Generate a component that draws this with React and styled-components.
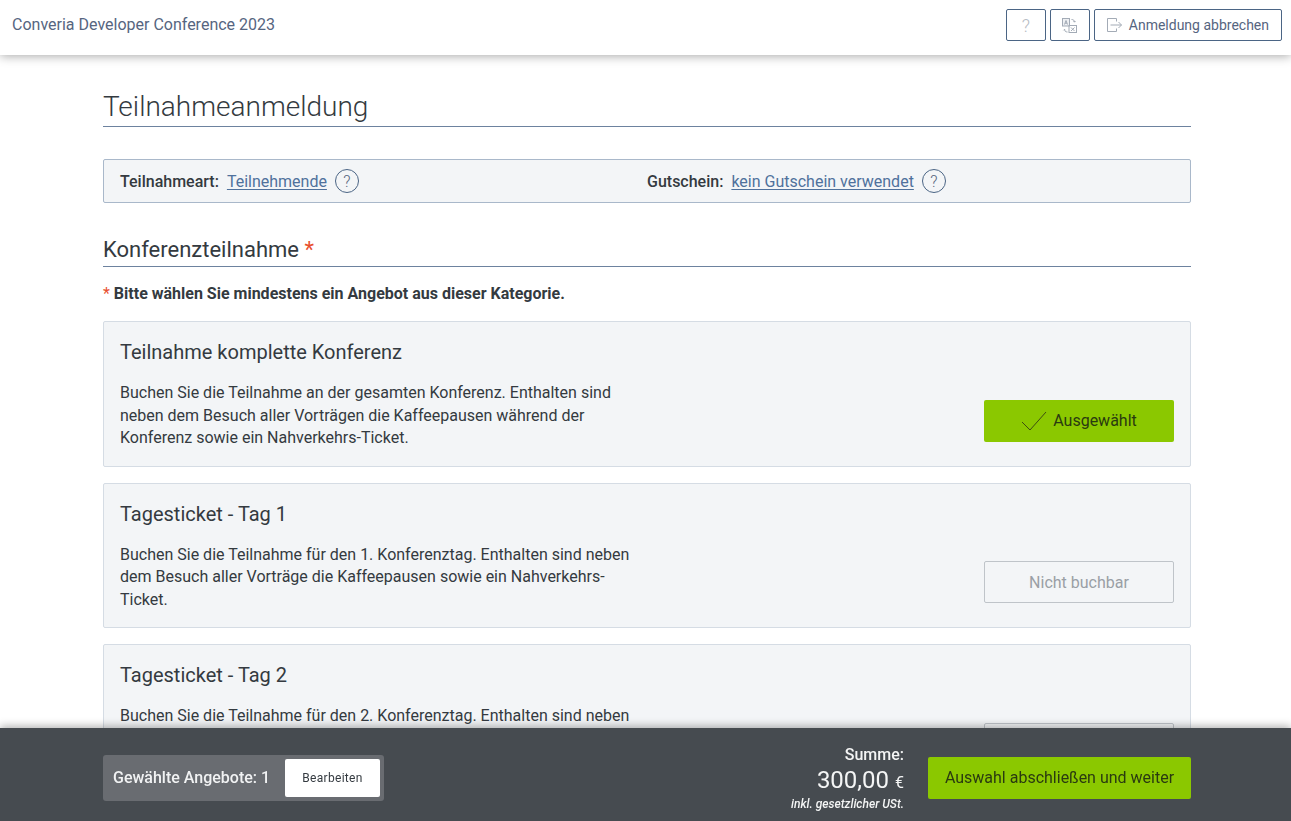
import React from "react";
import styled, { createGlobalStyle } from "styled-components";

const Global = createGlobalStyle`
  html, body { margin: 0; padding: 0; height: 100%; overflow: hidden; background: #fff; }
  body { font-family: Roboto, "Liberation Sans", sans-serif; color: #343a40; }
  * { box-sizing: border-box; }
`;
const Header = styled.header`
  height: 55px; background: #fff; display: flex; align-items: flex-start; justify-content: space-between;
  padding: 9px 9px 0 12px; box-shadow: 0 1px 10px rgba(0,0,0,.35); position: relative; z-index: 2;
`;
const Brand = styled.div`font-size: 16px; color: #56657f; line-height: 24px; margin-top: 4px;`;
const Tools = styled.div`display: flex; gap: 4px;`;
const ToolButton = styled.button`
  height: 32px; min-width: 40px; padding: ${p => p.$wide ? "0 12px 0 11px" : "0"}; display: flex; align-items: center; justify-content: center; gap: 7px;
  background: #fff; border: 1px solid #4b6585; border-radius: 2px; font: 400 14px Roboto, sans-serif; color: #56657f;
`;
const HelpGlyph = styled.span`font-size: 18px; font-weight: 300; color: #b5bbc3;`;
const Main = styled.main`padding: 32px 100px 0 103px;`;
const Title = styled.h1`
  margin: 0; font-size: 28px; font-weight: 300; line-height: 39px; color: #343a40; border-bottom: 1px solid #6d829f;
`;
const InfoBar = styled.div`
  margin-top: 32px; height: 44px; background: #f3f5f7; border: 1px solid #a9b8ca; border-radius: 2px; display: grid;
  grid-template-columns: 527px 1fr; padding-left: 16px; align-items: center; font-size: 16px;
`;
const InfoItem = styled.div`display: flex; align-items: center;`;
const Label = styled.strong`font-weight: 500; margin-right: 8px;`;
const InfoLink = styled.a`color: #4f719c; text-decoration: underline; text-underline-offset: 2px;`;
const HelpCircle = styled.span`
  width: 24px; height: 24px; margin-left: 8px; border: 1px solid #4b6585; border-radius: 50%; display: inline-flex;
  align-items: center; justify-content: center; font-size: 16px; font-weight: 300; color: #56657f;
`;
const SectionTitle = styled.h2`
  margin: 31px 0 0; font-size: 22px; line-height: 31px; font-weight: 400; border-bottom: 1px solid #6d829f; padding-bottom: 1px; color: #343a40;
`;
const Star = styled.span`color: #e8502f; font-weight: ${p => p.$thin ? 400 : "inherit"};`;
const Hint = styled.p`margin: 16px 0 17px; font-size: 16px; line-height: 21px; font-weight: 700;`;
const Cards = styled.div`display: flex; flex-direction: column; gap: 16px;`;
const Card = styled.article`
  height: 145.5px; background: #f3f5f7; border: 1px solid #d5dce4; border-radius: 2px; padding: 16px;
`;
const CardTitle = styled.h3`margin: 0 0 16px; font-size: 20px; line-height: 28px; font-weight: 400; color: #343a40;`;
const CardRow = styled.div`display: flex; justify-content: space-between; align-items: flex-end;`;
const CardText = styled.p`margin: 0; width: 515px; font-size: 16px; line-height: 22.5px; color: #343a40;`;
const SelectButton = styled.button`
  width: 190px; height: 42px; margin-bottom: 8px; border-radius: 2px; font: 400 16px Roboto, sans-serif; display: flex; align-items: center; justify-content: center; gap: 6px;
  background: ${p => p.$selected ? "#8bc800" : "#f3f5f7"}; color: ${p => p.$selected ? "#2a3a10" : "#9a9fa5"};
  border: ${p => p.$selected ? "0" : "1px solid #bfc4c9"};
`;
const Footer = styled.footer`
  position: fixed; left: 0; right: 0; bottom: 0; height: 93px; background: #464b50; padding: 6px 100px 0 103px;
  display: flex; align-items: center; justify-content: space-between; box-shadow: 0 -2px 8px rgba(0,0,0,.3); z-index: 3;
`;
const Chosen = styled.div`
  width: 281px; height: 46px; background: #696c71; border-radius: 3px; display: flex; align-items: center; justify-content: space-between; padding: 0 4px 0 10px;
  font-size: 16px; font-weight: 500; color: #f1f2f3;
`;
const EditButton = styled.button`
  width: 95px; height: 38px; background: #fff; border: 0; border-radius: 2px; font: 400 12px Roboto, sans-serif; color: #343a40; letter-spacing: .3px;
`;
const FooterRight = styled.div`display: flex; align-items: center; gap: 24px;`;
const Sum = styled.div`text-align: right; color: #f4f5f5; padding-top: 2px;`;
const SumLabel = styled.div`font-size: 16px; font-weight: 500; line-height: 20px;`;
const SumValue = styled.div`font-size: 24px; font-weight: 400; line-height: 30px; small { font-size: 16px; }`;
const SumNote = styled.div`font-size: 12px; font-weight: 500; font-style: italic; line-height: 16px; margin-top: -2px;`;
const NextButton = styled.button`
  width: 263px; height: 42px; background: #8bc800; border: 0; border-radius: 2px; font: 400 16px Roboto, sans-serif; color: #2a3a10;
`;

const LeaveIcon = () => (
  <svg width="16" height="16" viewBox="0 0 16 16" fill="none" stroke="#a3abb6" strokeWidth="1">
    <path d="M10.5 4.5V1.5h-9v13h9V11.5M4.5 8h11M12.5 5l3 3-3 3" />
  </svg>
);
const TranslateIcon = () => (
  <svg width="15" height="15" viewBox="0 0 15 15" fill="none" stroke="#a3abb6" strokeWidth="1">
    <rect x="0.5" y="0.5" width="7" height="7.5" fill="#eef0f3" />
    <path d="M2.5 6.5L4 2.5l1.5 4M3 5.2h2" />
    <rect x="7" y="7.5" width="7.5" height="7" />
    <path d="M9 9.5l3.5 3.5M12.5 9.5L9 13" />
    <path d="M9.5 1.5c2 0 3 1 3 2.5M11.5 3.2l1 1 1-1M5.5 14c-2 0-3-1-3-2.5M1.5 12.3l1-1 1 1" />
  </svg>
);
const CheckIcon = () => (
  <svg width="26" height="20" viewBox="0 0 26 20" fill="none" stroke="#3d4d12" strokeWidth="1">
    <path d="M1 11l8 8L25 1" />
  </svg>
);

const cards = [
  ["Teilnahme komplette Konferenz", <>Buchen Sie die Teilnahme an der gesamten Konferenz. Enthalten sind<br />neben dem Besuch aller Vorträgen die Kaffeepausen während der<br />Konferenz sowie ein Nahverkehrs-Ticket.</>, true],
  ["Tagesticket - Tag 1", <>Buchen Sie die Teilnahme für den 1. Konferenztag. Enthalten sind neben<br />dem Besuch aller Vorträge die Kaffeepausen sowie ein Nahverkehrs-<br />Ticket.</>, false],
  ["Tagesticket - Tag 2", <>Buchen Sie die Teilnahme für den 2. Konferenztag. Enthalten sind neben<br />dem Besuch aller Vorträge die Kaffeepausen sowie ein Nahverkehrs-<br />Ticket.</>, false],
];

export default function App() {
  return (
    <>
      <Global />
      <Header>
        <Brand>Converia Developer Conference 2023</Brand>
        <Tools>
          <ToolButton aria-label="Hilfe"><HelpGlyph>?</HelpGlyph></ToolButton>
          <ToolButton aria-label="Sprache"><TranslateIcon /></ToolButton>
          <ToolButton $wide><LeaveIcon />Anmeldung abbrechen</ToolButton>
        </Tools>
      </Header>
      <Main>
        <Title>Teilnahmeanmeldung</Title>
        <InfoBar>
          <InfoItem><Label>Teilnahmeart:</Label><InfoLink>Teilnehmende</InfoLink><HelpCircle>?</HelpCircle></InfoItem>
          <InfoItem><Label>Gutschein:</Label><InfoLink>kein Gutschein verwendet</InfoLink><HelpCircle>?</HelpCircle></InfoItem>
        </InfoBar>
        <SectionTitle>Konferenzteilnahme <Star>*</Star></SectionTitle>
        <Hint><Star $thin>*</Star> Bitte wählen Sie mindestens ein Angebot aus dieser Kategorie.</Hint>
        <Cards>
          {cards.map(([title, text, selected]) => (
            <Card key={title}>
              <CardTitle>{title}</CardTitle>
              <CardRow>
                <CardText>{text}</CardText>
                <SelectButton $selected={selected}>{selected && <CheckIcon />}{selected ? "Ausgewählt" : "Nicht buchbar"}</SelectButton>
              </CardRow>
            </Card>
          ))}
        </Cards>
      </Main>
      <Footer>
        <Chosen>Gewählte Angebote: 1<EditButton>Bearbeiten</EditButton></Chosen>
        <FooterRight>
          <Sum>
            <SumLabel>Summe:</SumLabel>
            <SumValue>300,00 <small>€</small></SumValue>
            <SumNote>inkl. gesetzlicher USt.</SumNote>
          </Sum>
          <NextButton>Auswahl abschließen und weiter</NextButton>
        </FooterRight>
      </Footer>
    </>
  );
}
